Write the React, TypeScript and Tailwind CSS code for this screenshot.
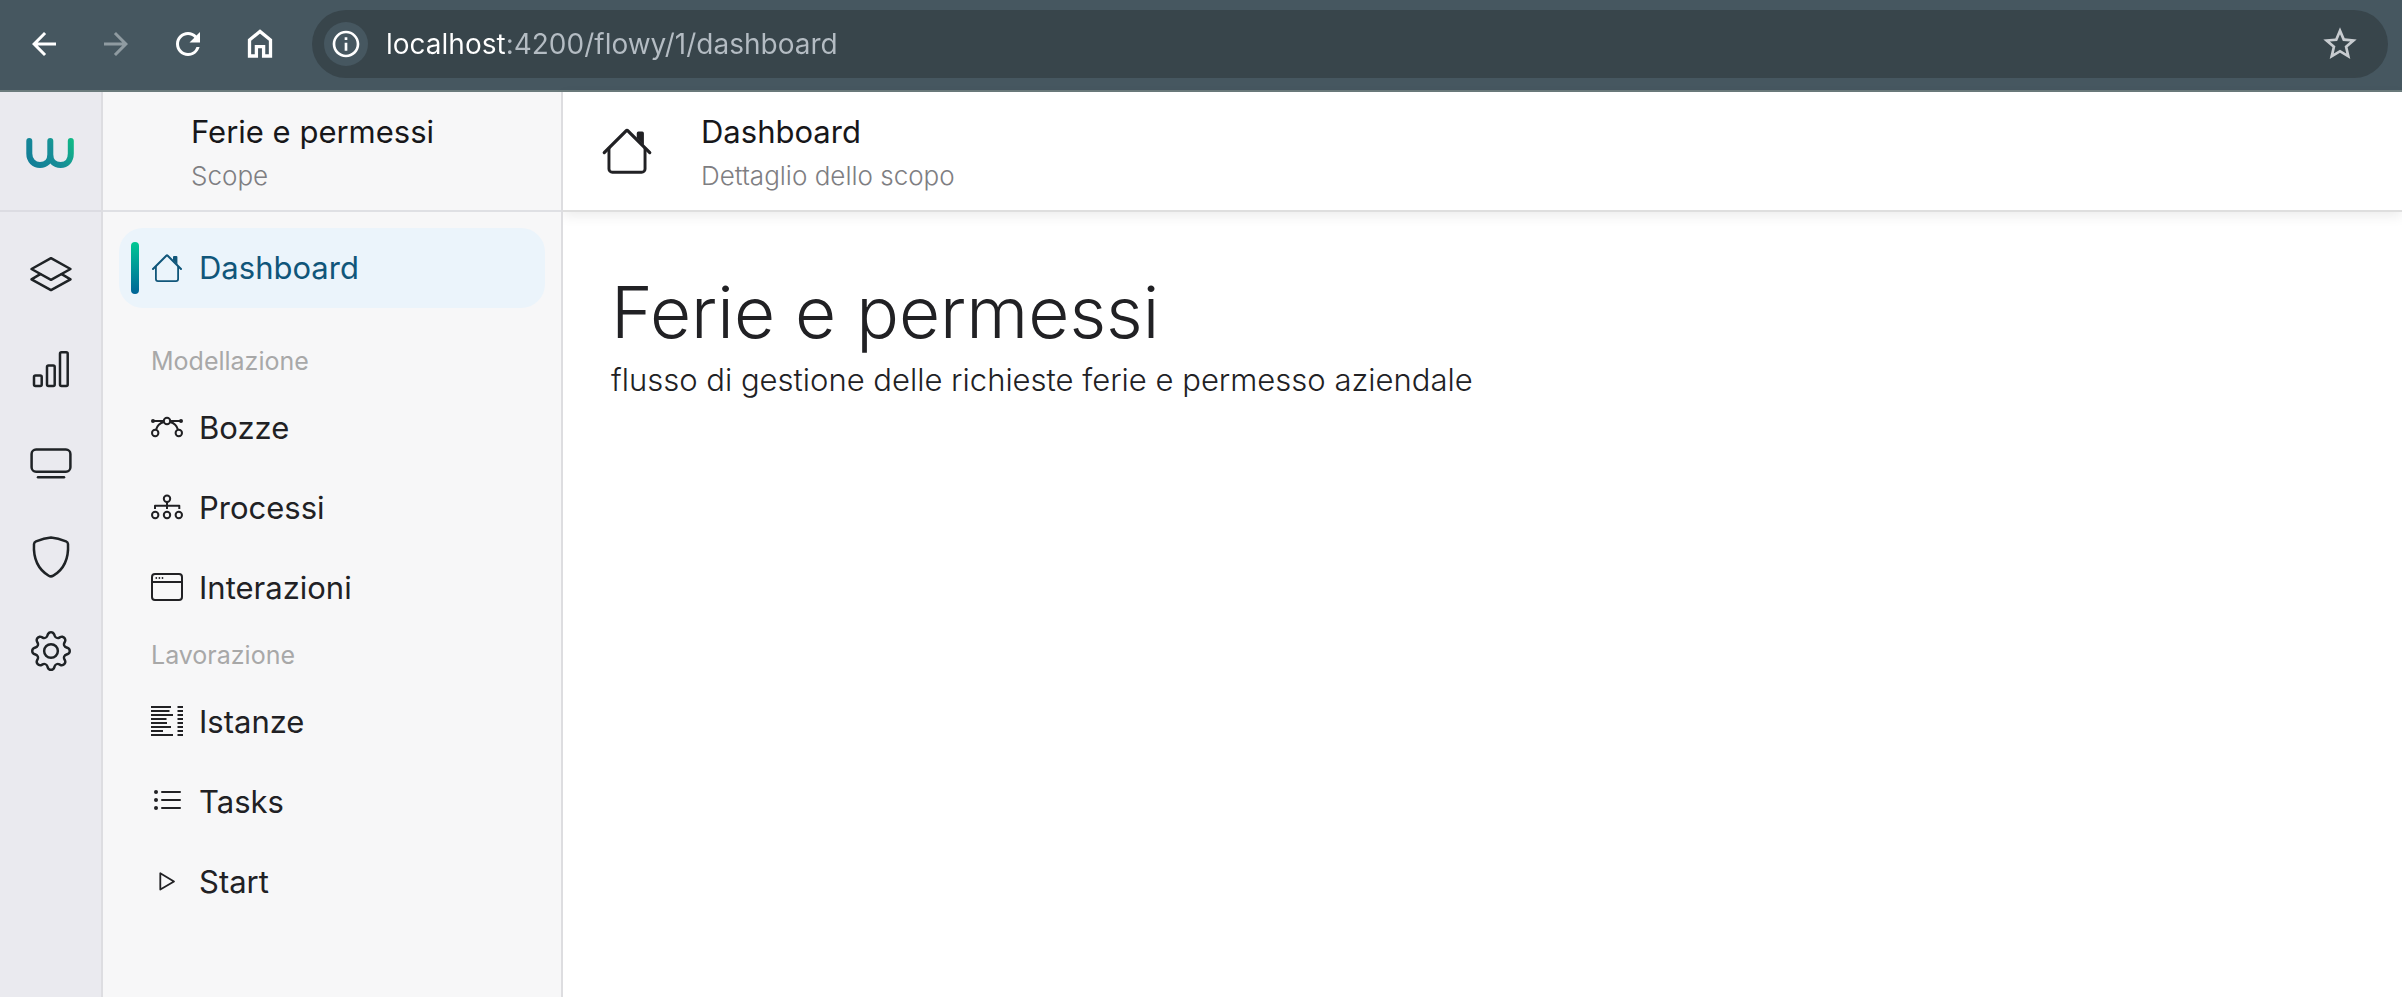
import React from "react";
import { MdArrowBack, MdArrowForward, MdInfoOutline, MdRefresh, MdStarBorder } from "react-icons/md";
import { BsGear } from "react-icons/bs";

type IconProps = { className?: string };

function HouseIcon({ className }: IconProps) {
  return (
    <svg viewBox="0 0 16 16" fill="currentColor" className={className} aria-hidden="true">
      <path d="M2 13.5V7h.9v6.5a.6.6 0 0 0 .6.6h9a.6.6 0 0 0 .6-.6V7h.9v6.5a1.5 1.5 0 0 1-1.5 1.5h-9A1.5 1.5 0 0 1 2 13.5zm11.2-11V6.2l-2.2-2.2V2.5a.5.5 0 0 1 .5-.5h1.2a.5.5 0 0 1 .5.5z" />
      <path d="M7.293 1.5a1 1 0 0 1 1.414 0l6.647 6.646a.5.5 0 0 1-.708.708L8 2.207 1.354 8.854a.5.5 0 1 1-.708-.708L7.293 1.5z" />
    </svg>
  );
}

function BezierIcon({ className }: IconProps) {
  return (
    <svg viewBox="0 0 32 32" fill="none" stroke="currentColor" strokeWidth="2" className={className} aria-hidden="true">
      <circle cx="16" cy="9" r="3.2" />
      <circle cx="4.2" cy="21" r="3.2" />
      <circle cx="27.8" cy="21" r="3.2" />
      <path d="M2 9h10.8M19.2 9H30M13 10C8.5 11 6 14 5 17.8M19 10c4.5 1 7 4 8 7.8" />
      <circle cx="2" cy="9" r="2" fill="currentColor" stroke="none" />
      <circle cx="30" cy="9" r="2" fill="currentColor" stroke="none" />
    </svg>
  );
}

function DiagramIcon({ className }: IconProps) {
  return (
    <svg viewBox="0 0 32 32" fill="none" stroke="currentColor" strokeWidth="2" className={className} aria-hidden="true">
      <circle cx="16" cy="6.7" r="3.2" />
      <circle cx="4.2" cy="23" r="3.2" />
      <circle cx="16" cy="23" r="3.2" />
      <circle cx="27.8" cy="23" r="3.2" />
      <path d="M16 10v7M4 17v-3.2h24.3V17" strokeLinejoin="round" />
    </svg>
  );
}

function WindowIcon({ className }: IconProps) {
  return (
    <svg viewBox="0 0 32 32" fill="none" stroke="currentColor" strokeWidth="2" className={className} aria-hidden="true">
      <rect x="1" y="2" width="30" height="26" rx="3" />
      <path d="M1 10h30" />
      <g fill="currentColor" stroke="none">
        <circle cx="5.3" cy="6" r="0.9" />
        <circle cx="8.4" cy="6" r="0.9" />
        <circle cx="11.5" cy="6" r="0.9" />
      </g>
    </svg>
  );
}

function ColumnsIcon({ className }: IconProps) {
  return (
    <svg viewBox="0 0 32 32" fill="none" stroke="currentColor" strokeWidth="2" className={className} aria-hidden="true">
      <path d="M0 1h20M0 5h18.5M0 9h22M0 13h15.5M0 17h16M0 21h20M0 25h12M0 29h22" />
      <path d="M26.5 1H32M26.5 5H32M26.5 9H32M26.5 13H32M26.5 17H32M26.5 21H32M26.5 25H32M26.5 29H32" />
    </svg>
  );
}

function ListIcon({ className }: IconProps) {
  return (
    <svg viewBox="0 0 32 32" fill="none" stroke="currentColor" strokeWidth="2" className={className} aria-hidden="true">
      <path d="M11 6h18M11 14h18M11 22h18" strokeLinecap="round" />
      <g fill="currentColor" stroke="none">
        <circle cx="5" cy="6" r="2" />
        <circle cx="5" cy="14" r="2" />
        <circle cx="5" cy="22" r="2" />
      </g>
    </svg>
  );
}

function PlayIcon({ className }: IconProps) {
  return (
    <svg viewBox="0 0 32 32" fill="none" stroke="currentColor" strokeWidth="1.8" strokeLinejoin="round" className={className} aria-hidden="true">
      <path d="M9.3 7.2v16.4L23 15.4z" />
    </svg>
  );
}

function LayersIcon({ className }: IconProps) {
  return (
    <svg viewBox="0 0 44 44" fill="none" stroke="currentColor" strokeWidth="2.5" strokeLinejoin="round" strokeLinecap="round" className={className} aria-hidden="true">
      <path d="M22 5.2 41.500 16 22 26.8 2.500 16z" />
      <path d="M11.3 21.2 2.500 26.3 22 37.1l19.500-10.800-8.800-5.100" />
    </svg>
  );
}

function ChartIcon({ className }: IconProps) {
  return (
    <svg viewBox="0 0 44 44" fill="none" stroke="currentColor" strokeWidth="2.5" className={className} aria-hidden="true">
      <rect x="5" y="28.5" width="7.7" height="10.5" rx="1.5" />
      <rect x="18" y="18.5" width="7.7" height="20.5" rx="1.5" />
      <rect x="31" y="5.3" width="7.7" height="33.7" rx="1.5" />
    </svg>
  );
}

function DisplayIcon({ className }: IconProps) {
  return (
    <svg viewBox="0 0 44 44" fill="none" stroke="currentColor" strokeWidth="2.5" strokeLinecap="round" className={className} aria-hidden="true">
      <rect x="2.6" y="8.5" width="38.8" height="22.3" rx="4.5" />
      <path d="M9 36.3h26" />
    </svg>
  );
}

function ShieldIcon({ className }: IconProps) {
  return (
    <svg viewBox="0 0 44 44" fill="none" stroke="currentColor" strokeWidth="2.5" strokeLinejoin="round" className={className} aria-hidden="true">
      <path d="M22 2.5c-4.500.3-10.500 2-15 3.900-1.200.5-1.900 1.300-2 2.600-.8 14.500 4.300 25.500 14.700 31.700 1.700 1 2.900 1 4.600 0C34.700 34.500 39.800 23.500 39 9c-.1-1.300-.8-2.100-2-2.600-4.500-1.900-10.500-3.600-15-3.900z" />
    </svg>
  );
}

function GearIcon({ className }: IconProps) {
  return (
    <span className={className}>
      <BsGear className="size-full p-0.5" aria-hidden="true" />
    </span>
  );
}

function Logo() {
  return (
    <svg viewBox="0 0 48 32" fill="none" className="h-8 w-12" role="img" aria-label="Logo">
      <defs>
        <linearGradient id="logo" x1="8" y1="30" x2="46" y2="4" gradientUnits="userSpaceOnUse">
          <stop offset="0" stopColor="#127f97" />
          <stop offset="0.55" stopColor="#178f97" />
          <stop offset="1" stopColor="#10b886" />
        </linearGradient>
      </defs>
      <path
        d="M3.300 4v12.500C3.300 23.500 8 28 14 28c6.200 0 10.300-4 10.300-10.500V4v13.500C24.300 24 28.400 28 34.600 28c6 0 10.200-4.500 10.200-11.500V4"
        stroke="url(#logo)"
        strokeWidth="6"
        strokeLinecap="round"
        strokeLinejoin="round"
      />
    </svg>
  );
}

function BrowserBar() {
  return (
    <div className="flex h-[92px] shrink-0 items-start border-b-2 border-[#6b7b7c] bg-[#465760] pt-2.5 pr-3.5 pl-2 text-white">
      <div className="flex h-[68px] items-center">
        <button type="button" aria-label="Indietro" className="flex w-[72px] justify-center">
          <MdArrowBack className="size-9" />
        </button>
        <button type="button" aria-label="Avanti" className="flex w-[72px] justify-center text-[#8f9ba1]">
          <MdArrowForward className="size-9" />
        </button>
        <button type="button" aria-label="Ricarica" className="flex w-[72px] justify-center">
          <MdRefresh className="size-9" />
        </button>
        <button type="button" aria-label="Pagina iniziale" className="flex w-[72px] justify-center">
          <svg viewBox="0 0 24 24" fill="none" stroke="currentColor" strokeWidth="2.2" className="size-9" aria-hidden="true">
            <path d="M5 20V9.3L12 3.6l7 5.7V20h-4.6v-6.2H9.6V20z" />
          </svg>
        </button>
      </div>
      <div className="ml-4 flex h-[68px] flex-1 items-center rounded-full bg-[#38454b] pr-7 pl-3">
        <button type="button" aria-label="Informazioni sul sito" className="flex size-11 items-center justify-center rounded-full bg-[#465760]">
          <MdInfoOutline className="size-8" />
        </button>
        <input
          type="text"
          aria-label="Indirizzo"
          defaultValue="localhost:4200/flowy/1/dashboard"
          className="ml-[18px] min-w-0 flex-1 bg-[linear-gradient(90deg,#ffffff_120px,#b4bcc3_120px)] bg-clip-text text-[28px] leading-10 text-transparent outline-none"
        />
        <button type="button" aria-label="Aggiungi ai preferiti" className="text-[#c8ccd0]">
          <MdStarBorder className="size-10" />
        </button>
      </div>
    </div>
  );
}

const railItems = [
  { label: "Livelli", Icon: LayersIcon },
  { label: "Statistiche", Icon: ChartIcon },
  { label: "Monitor", Icon: DisplayIcon },
  { label: "Sicurezza", Icon: ShieldIcon },
  { label: "Impostazioni", Icon: GearIcon },
];

function Rail() {
  return (
    <nav aria-label="Principale" className="flex w-[103px] shrink-0 flex-col border-r-2 border-[#dddde1] bg-[#eaeaef]">
      <a href="#home" className="flex h-[120px] items-center justify-center border-b-2 border-[#dcdce2] pt-1 pr-0.5">
        <Logo />
      </a>
      <div className="flex flex-col pt-4">
        {railItems.map(({ label, Icon }) => (
          <a key={label} href={"#" + label.toLowerCase()} aria-label={label} className="flex h-[94px] items-center justify-center text-[#1f2326]">
            <Icon className="size-11" />
          </a>
        ))}
      </div>
    </nav>
  );
}

type NavItem = { label: string; Icon: (props: IconProps) => React.JSX.Element };

const modelling: NavItem[] = [
  { label: "Bozze", Icon: BezierIcon },
  { label: "Processi", Icon: DiagramIcon },
  { label: "Interazioni", Icon: WindowIcon },
];

const processing: NavItem[] = [
  { label: "Istanze", Icon: ColumnsIcon },
  { label: "Tasks", Icon: ListIcon },
  { label: "Start", Icon: PlayIcon },
];

function NavLink({ label, Icon }: NavItem) {
  return (
    <a href={"#" + label.toLowerCase()} className="flex h-20 items-center gap-4 pl-8 text-[31px] leading-10 text-[#212124]">
      <Icon className="size-8" />
      {label}
    </a>
  );
}

function SectionLabel({ children }: { children: React.ReactNode }) {
  return <h2 className="flex h-[54px] items-center pl-8 text-[25px] leading-8 text-[#a8a8a8]">{children}</h2>;
}

function Sidebar() {
  return (
    <aside className="z-10 flex w-[460px] shrink-0 flex-col border-r-2 border-[#dddde0] bg-[#f7f7f8]">
      <div className="flex h-[120px] flex-col justify-center gap-1.5 border-b-2 border-[#dfe0e4] pt-1 pl-22">
        <span className="text-[31px] leading-10 text-[#17171a]">Ferie e permessi</span>
        <span className="text-[26px] leading-9 font-light text-[#7e7e82]">Scope</span>
      </div>
      <nav aria-label="Scope" className="flex flex-col px-4 pt-4">
        <a href="#dashboard" aria-current="page" className="mb-[26px] flex h-20 items-center rounded-3xl bg-[#ebf4fb] pl-3 text-[31px] leading-10 text-[#10567a]">
          <span className="mr-3 h-[52px] w-2 rounded-full bg-linear-to-b from-[#00c892] to-[#006496]" />
          <HouseIcon className="mr-4 size-8" />
          Dashboard
        </a>
        <SectionLabel>Modellazione</SectionLabel>
        {modelling.map((item) => (
          <NavLink key={item.label} {...item} />
        ))}
        <SectionLabel>Lavorazione</SectionLabel>
        {processing.map((item) => (
          <NavLink key={item.label} {...item} />
        ))}
      </nav>
    </aside>
  );
}

export default function App() {
  return (
    <div className="flex min-h-screen flex-col bg-white font-['Inter',sans-serif]">
      <BrowserBar />
      <div className="flex flex-1">
        <Rail />
        <Sidebar />
        <div className="flex min-w-0 flex-1 flex-col">
          <header className="flex h-[120px] items-center border-b-2 border-[#dedede] pl-[38px] shadow-[0_4px_12px_rgba(0,0,0,0.08)]">
            <HouseIcon className="mr-12 size-[52px] text-[#212124]" />
            <div className="flex flex-col gap-1.5 pt-1">
              <span className="text-[31px] leading-10 text-[#17171a]">Dashboard</span>
              <span className="text-[26px] leading-9 font-light text-[#7e7e82]">Dettaglio dello scopo</span>
            </div>
          </header>
          <main className="flex flex-col px-12 pt-14 text-[#212124]">
            <h1 className="text-[71px] leading-[88px] font-light">Ferie e permessi</h1>
            <p className="text-[31px] leading-12 font-light">flusso di gestione delle richieste ferie e permesso aziendale</p>
          </main>
        </div>
      </div>
    </div>
  );
}
